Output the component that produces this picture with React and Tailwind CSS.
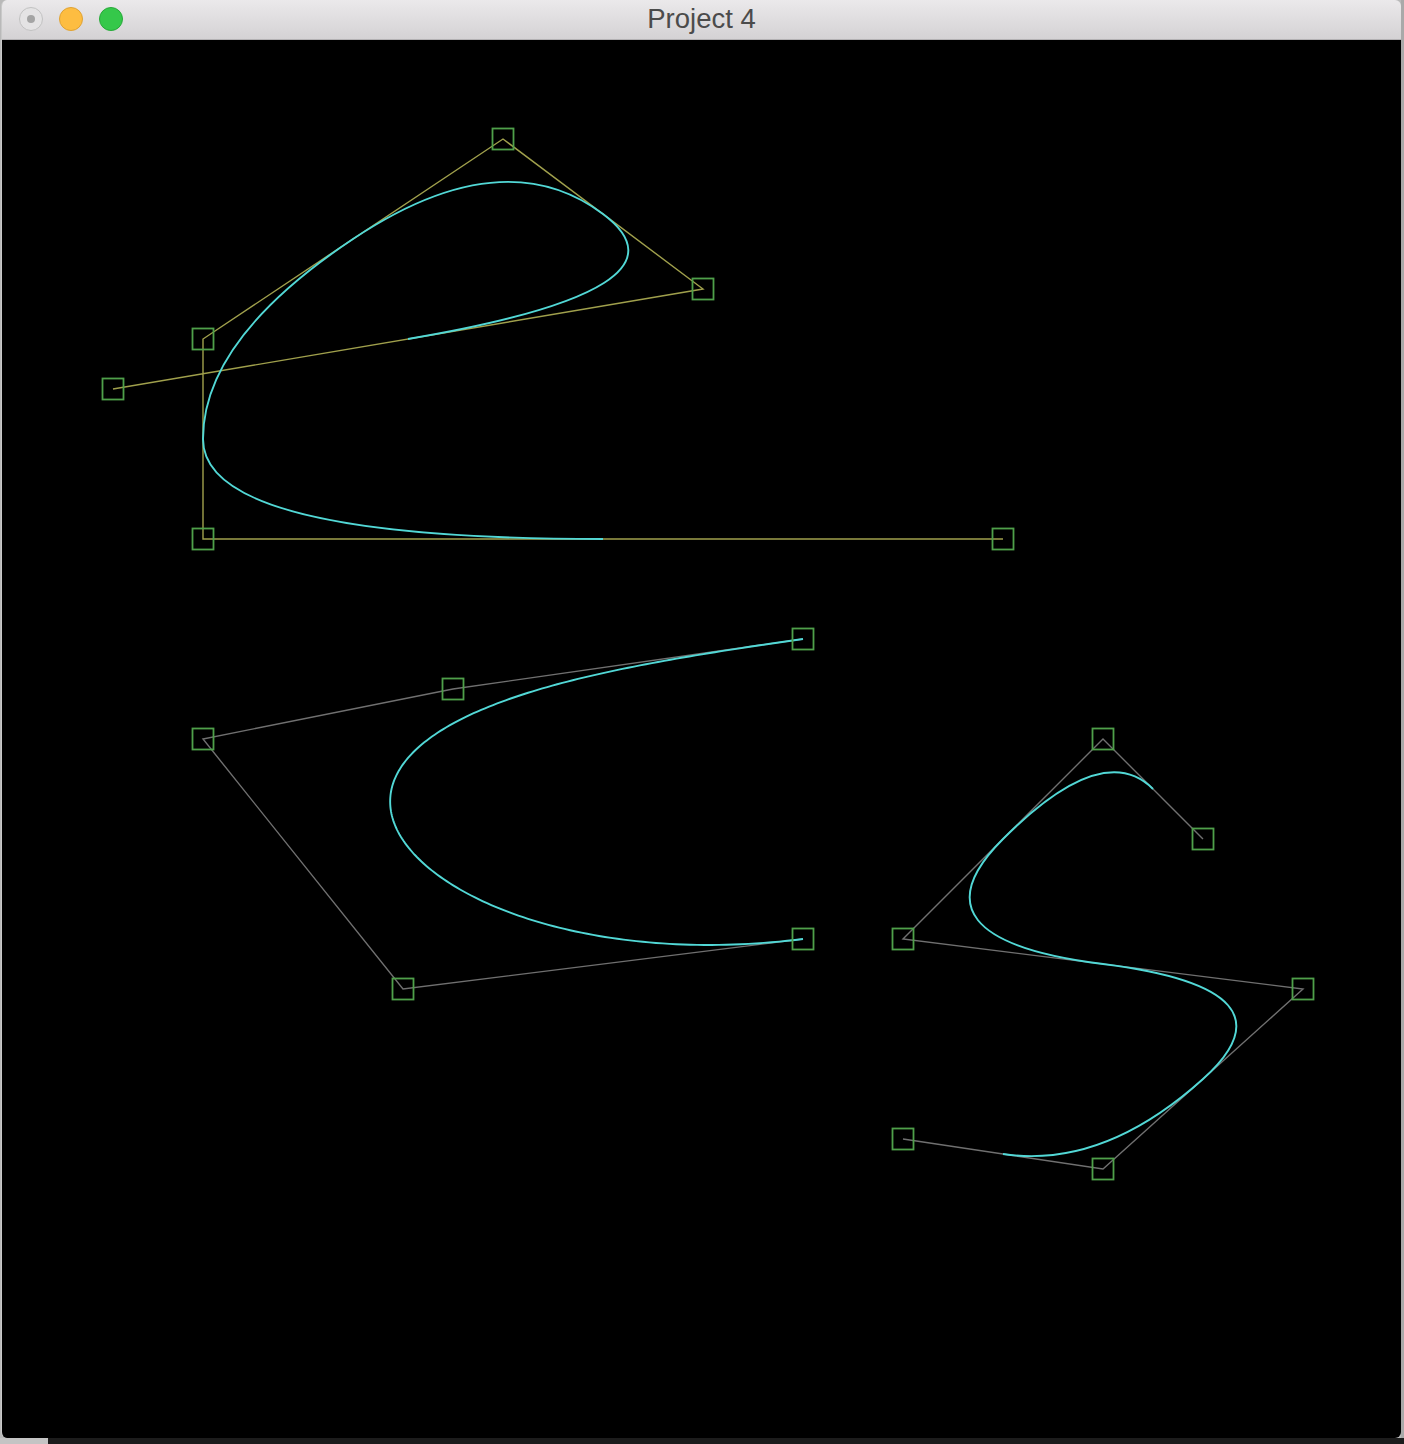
import React from 'react';

// control polygons, in page pixels
const curves = [
  {
    kind: 'bspline2',
    line: '#a0a04c',
    pts: [[1003, 539], [203, 539], [203, 339], [503, 139], [703, 289], [113, 389]],
  },
  {
    kind: 'bezier',
    line: '#707070',
    pts: [[803, 639], [453, 689], [203, 739], [403, 989], [803, 939]],
  },
  {
    kind: 'bspline2',
    line: '#707070',
    pts: [[1203, 839], [1103, 739], [903, 939], [1303, 989], [1103, 1169], [903, 1139]],
  },
];

const mid = (a, b) => [(a[0] + b[0]) / 2, (a[1] + b[1]) / 2];

const bezierPoint = (pts, t) => {
  let p = pts.map((q) => [...q]);
  while (p.length > 1) {
    const n = [];
    for (let i = 0; i < p.length - 1; i++) {
      n.push([p[i][0] + (p[i + 1][0] - p[i][0]) * t, p[i][1] + (p[i + 1][1] - p[i][1]) * t]);
    }
    p = n;
  }
  return p[0];
};

const curvePath = ({ kind, pts }) => {
  if (kind === 'bezier') {
    const out = [];
    for (let i = 0; i <= 200; i++) out.push(bezierPoint(pts, i / 200));
    return 'M' + out.map((p) => p[0].toFixed(2) + ' ' + p[1].toFixed(2)).join(' L');
  }
  // uniform quadratic b-spline: midpoints joined by Q segments
  const start = mid(pts[0], pts[1]);
  let d = `M${start[0]} ${start[1]}`;
  for (let i = 1; i < pts.length - 1; i++) {
    const end = mid(pts[i], pts[i + 1]);
    d += ` Q${pts[i][0]} ${pts[i][1]} ${end[0]} ${end[1]}`;
  }
  return d;
};

const Light = ({ className, children }) => (
  <div className={`flex h-6 w-6 items-center justify-center rounded-full border ${className}`}>
    {children}
  </div>
);

const App = () => {
  return (
    <div className="flex h-[1444px] w-[1404px] flex-col overflow-hidden bg-[#1e1e1e]">
      <div className="flex h-[1438px] bg-[#b9b9b9]">
        <div className="ml-px flex h-full w-[1400px] flex-col overflow-hidden rounded-t-[6px] rounded-b-[6px] border-l border-[#c9c9c9]">
          <div className="relative flex h-[40px] shrink-0 items-center border-b border-[#b3b1b3] bg-gradient-to-b from-[#ebe9eb] to-[#d4d2d4]">
            <div className="flex items-center gap-4 pl-[17px] pb-px">
              <Light className="border-[#c2c2c2] bg-[#e4e3e4]">
                <div className="h-2 w-2 rounded-full bg-[#a4a4a4]" />
              </Light>
              <Light className="border-[#dfa234] bg-[#fdbd41]" />
              <Light className="border-[#28a93a] bg-[#35c84a]" />
            </div>
            <div
              className="absolute inset-x-0 top-[3px] text-center text-[27.5px] leading-[32px] text-[#4b4b4b]"
              style={{ fontFamily: '"Liberation Sans", Arial, sans-serif' }}
            >
              Project 4
            </div>
          </div>
          <div className="flex-1 bg-black">
            <svg className="block h-full w-full" viewBox="2 40 1399 1398" preserveAspectRatio="none">
              {curves.map((c, i) => (
                <g key={i}>
                  <polyline
                    points={c.pts.map((p) => p.join(',')).join(' ')}
                    fill="none"
                    stroke={c.line}
                    strokeWidth="1.4"
                  />
                  <path d={curvePath(c)} fill="none" stroke="#52d8d6" strokeWidth="1.9" />
                  {c.pts.map((p, j) => (
                    <rect
                      key={j}
                      x={p[0] - 10.5}
                      y={p[1] - 10.5}
                      width="21"
                      height="21"
                      fill="none"
                      stroke="#4fa04a"
                      strokeWidth="1.8"
                    />
                  ))}
                </g>
              ))}
            </svg>
          </div>
        </div>
        <div className="flex-1 bg-[#a9a9a9]" />
      </div>
      <div className="flex flex-1">
        <div className="w-[48px] bg-[#c4c4c4]" />
        <div className="flex-1 bg-[#1c1c1c]" />
      </div>
    </div>
  );
};

export default App;
